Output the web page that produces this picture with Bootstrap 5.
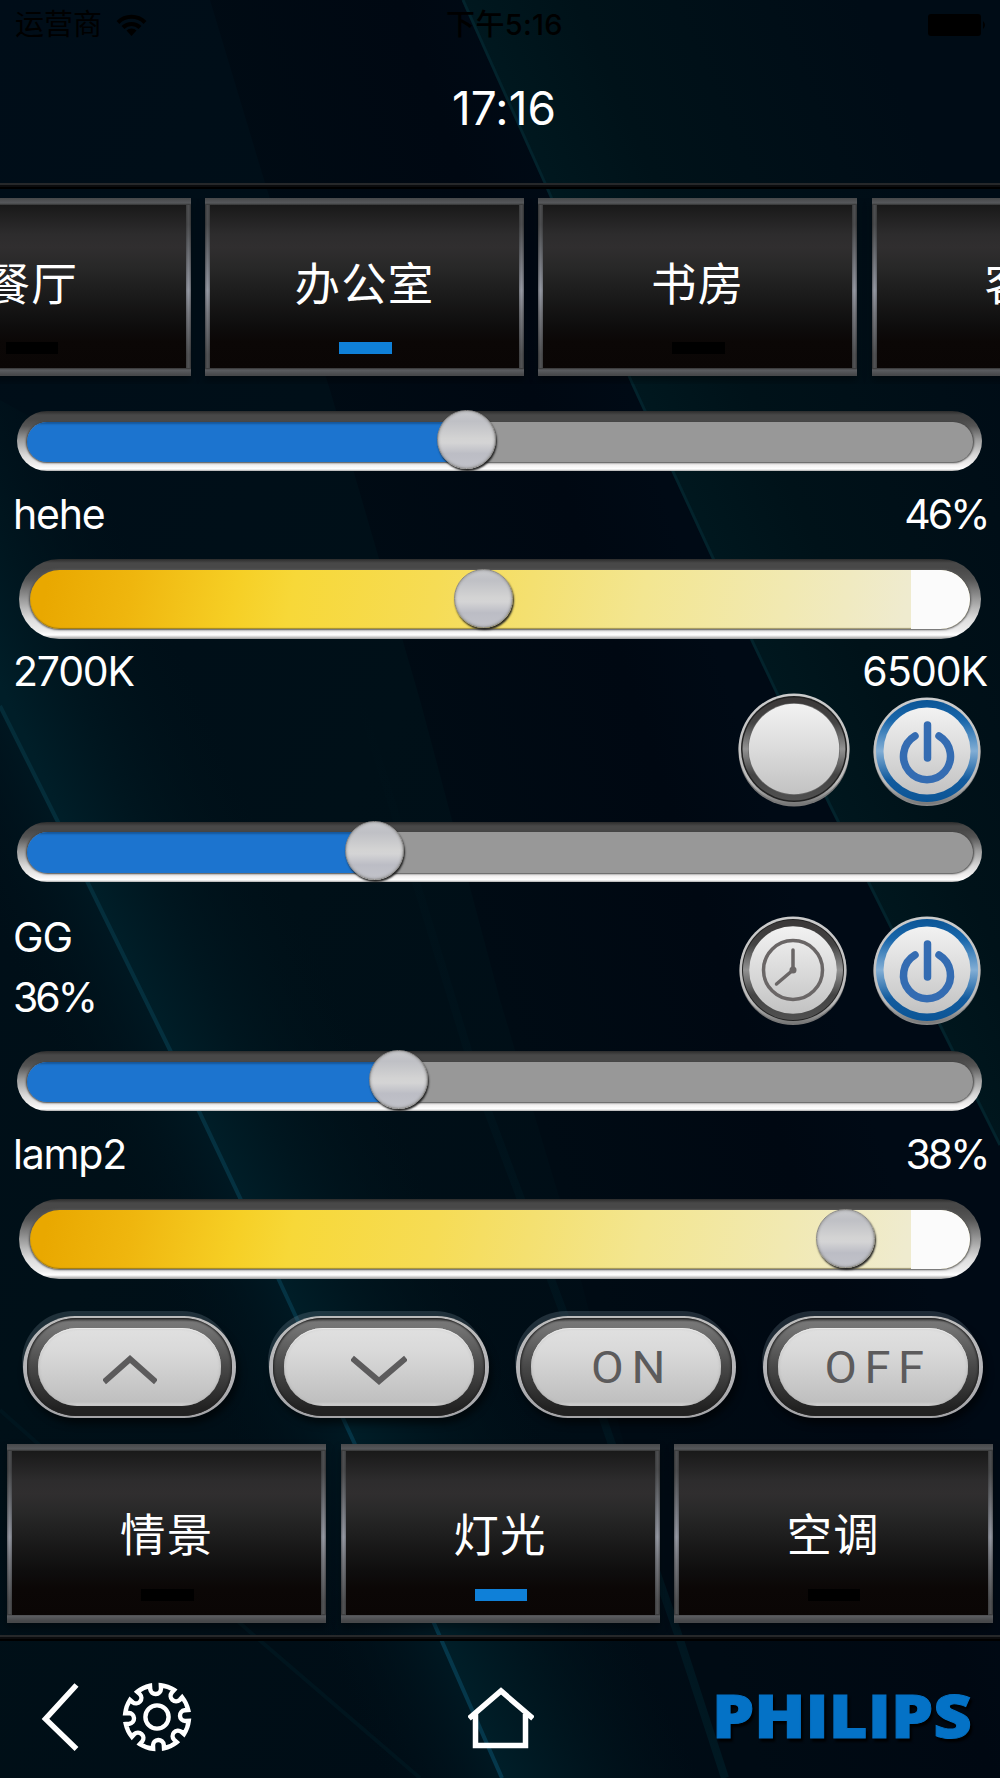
<!DOCTYPE html>
<html lang="zh-CN">
<head>
<meta charset="utf-8">
<meta name="viewport" content="width=device-width, initial-scale=1">
<title>灯光</title>
<link href="https://cdn.jsdelivr.net/npm/bootstrap@5.3.0/dist/css/bootstrap.min.css" rel="stylesheet">
<style>
body{background:#000c16;color:#fff;font-family:Inter,"Noto Sans CJK SC",sans-serif;width:1000px;height:1778px;overflow:hidden}
svg{display:block;flex:none}
.backdrop-art{position:absolute;inset:0;z-index:-1}
.status-line{height:50px;padding:0 14px 0 15px;color:#000;font-size:29px;line-height:50px}
.status-line .side{width:200px;gap:14px}
.status-time{letter-spacing:.3px}
.clock-text{height:133px;padding-bottom:17px;font-size:46px;letter-spacing:.1px}
.rule-line{height:6px;background:linear-gradient(#26282a 0 1.5px,#0b0c0e 2px 4px,#000 4px);flex:none}
.tile-strip{gap:14.3px;flex:none;padding-bottom:6px}
.tile-scroll{margin-top:8.5px;padding-bottom:8px;overflow:hidden}
.tile-scroll .tile:first-child{margin-left:-128.3px}
.tile{width:319px;height:178.5px;flex:none;padding:7px 5px 8px;background:
 linear-gradient(#47484a,#56585b 5px,#333 7px,transparent 7px),
 linear-gradient(transparent 170px,#333 170px,#5b5d61 172px,#47484a 177px),
 linear-gradient(90deg,rgba(0,0,0,.35),transparent 2px 3px,rgba(0,0,0,.25) 5px,transparent 5px 314px,rgba(0,0,0,.25) 314px,transparent 316px 317px,rgba(0,0,0,.35)),
 linear-gradient(#4c4d4f 15%,#9498a2 52%,#77797f 65%,#505153 88%);box-shadow:0 5px 8px rgba(0,0,0,.35)}
.tile-face{position:relative;height:100%;font-size:45.5px;letter-spacing:1.2px;line-height:153px;text-align:center;font-family:"Noto Sans CJK SC",sans-serif;background:linear-gradient(#191919,#2d2c2d 18%,#302e2f 26%,#282828 38%,#1b1b1b 55%,#0e0d0d 74%,#0b0706 84%,#0a0605)}
.tile-tall .tile-face{line-height:162px}
.tile-face::after{content:"";position:absolute;left:129px;bottom:14px;width:52.5px;height:12px;background:#000}
.tile-face.active::after{background:#0f80d8}
.track{position:relative;flex:none}
.dim{margin:0 18px 0 17px;height:60px;border-radius:30px;padding:10.5px 9px 9px 10px;background:linear-gradient(#2c2c2c,#484848 4px 8px,#555 15px,#999 28px,#d8d8d8 44px,#f2f0f0 54px,#fff 58px,#aaa)}
.dim-inner{height:100%;border-radius:21px;overflow:hidden;background:#989898;box-shadow:0 0 2px 1px #444}
.dim-fill{height:100%;background:#1c74cf;box-shadow:inset 0 2px 2px #16579b}
.thumb{position:absolute;top:-1px;width:59px;height:59px;margin-left:-30px;border-radius:50%;background:linear-gradient(#c9cacd,#bfc0c5 18%,#d3d3d3 48%,#d4d4d5 56%,#bcbdc5 75%,#c1c2c9);border:1.5px solid #8a8988;box-shadow:1px 2px 2px #222,inset 0 0 3px #888}
.cct{margin:0 19.5px 0 19px;height:79.5px;border-radius:40px;padding:10.5px 11px 10px;background:linear-gradient(#2c2c2c,#484848 4px 9px,#555 20px,#999 40px,#ddd 60px,#eee 72px,#fff 76px,#999)}
.cct-inner{height:100%;border-radius:30px;overflow:hidden;background:linear-gradient(100deg,#e9a800 2%,#efb60e 11%,#f6cf25 22%,#f7d838 28%,#f6dc55 43%,#f4e070 53%,#f3e691 65%,#f1e9b2 80%,#efebcf 93%);box-shadow:0 0 2px 1px #555,inset 0 -1px 1px rgba(80,70,30,.5)}
.cct-end{width:59px;height:100%;background:#fbfbfb;margin-left:auto;border-radius:0 30px 30px 0}
.cct .thumb{top:9.5px}
.label-line{padding:0 12.5px 0 13px;font-size:41px;letter-spacing:-1.2px;flex:none}
.pct{letter-spacing:-3px}
.label-line .stack{line-height:60px}
.round-set{gap:23px}
.pill-shell{height:102.5px;border-radius:52px/51px;background:linear-gradient(#bcbcbc,#b5b5b8 50%,#a4a4a7);padding:2.5px 4px;box-shadow:3px 6px 7px rgba(0,0,0,.55),-2px -6px 0 -1px rgba(105,125,140,.3);flex:none}
.pill-ring{height:100%;border-radius:49px/48px;padding:9.5px 11px 10px;background:linear-gradient(#3a3a3a,#777 4px,#747474 9px,#484848 50%,#222 92%);box-shadow:inset 0 0 2px 1px #222}
.pill-face{height:100%;border-radius:39px;background:linear-gradient(#e0e0e0,#d9d9d9 30%,#bfbfbf 95%,#ddd);box-shadow:inset 0 1px 1px #eee,inset 0 0 3px #aaa}
.pill-face text{font-family:Roboto,sans-serif;font-size:43.5px;fill:#5c5b5c;letter-spacing:7px}
.foot-bar{height:137px}
</style>
<script src="https://cdn.jsdelivr.net/npm/bootstrap@5.3.0/dist/js/bootstrap.bundle.min.js"></script>
</head>
<body class="position-relative d-flex flex-column m-0">
<svg class="backdrop-art" width="1000" height="1778" viewBox="0 0 1000 1778">
 <defs>
  <linearGradient id="base" x1="0" y1="0" x2="1" y2="1"><stop offset="0" stop-color="#000d18"/><stop offset=".4" stop-color="#001018"/><stop offset="1" stop-color="#000a14"/></linearGradient>
  <linearGradient id="right" gradientUnits="userSpaceOnUse" x1="600" y1="330" x2="940" y2="180"><stop offset="0" stop-color="#00181f"/><stop offset=".3" stop-color="#001219"/><stop offset="1" stop-color="#000c16"/></linearGradient>
  <linearGradient id="dark" gradientUnits="userSpaceOnUse" x1="300" y1="400" x2="600" y2="300"><stop offset="0" stop-color="#000b14"/><stop offset=".7" stop-color="#000812"/><stop offset="1" stop-color="#000a15"/></linearGradient>
  <linearGradient id="beam" gradientUnits="userSpaceOnUse" x1="230" y1="1180" x2="390" y2="1106"><stop offset="0" stop-color="#001e28"/><stop offset=".35" stop-color="#001720" stop-opacity=".9"/><stop offset="1" stop-color="#00121a" stop-opacity="0"/></linearGradient>
  <linearGradient id="beamL" gradientUnits="userSpaceOnUse" x1="230" y1="1180" x2="130" y2="1226"><stop offset="0" stop-color="#001822"/><stop offset="1" stop-color="#001019" stop-opacity="0"/></linearGradient>
  <linearGradient id="ray" x1="0" y1="0" x2="0" y2="1"><stop offset="0" stop-color="#042c38"/><stop offset="1" stop-color="#05384c"/></linearGradient>
  <linearGradient id="seam" gradientUnits="userSpaceOnUse" x1="0" y1="700" x2="0" y2="1778"><stop offset="0" stop-color="#001c26" stop-opacity="0"/><stop offset="1" stop-color="#001e28" stop-opacity=".7"/></linearGradient>
  <linearGradient id="face" x1="0" y1="0" x2="0" y2="1"><stop offset="0" stop-color="#f2f2f2"/><stop offset=".5" stop-color="#dbdbdb"/><stop offset="1" stop-color="#c2c2c2"/></linearGradient>
  <linearGradient id="rim" x1="0" y1="0" x2="0" y2="1"><stop offset="0" stop-color="#ccc"/><stop offset=".8" stop-color="#bbb"/><stop offset="1" stop-color="#777"/></linearGradient>
  <linearGradient id="grey" x1="0" y1="0" x2="0" y2="1"><stop offset="0" stop-color="#3a3737"/><stop offset=".25" stop-color="#444"/><stop offset=".5" stop-color="#929292"/><stop offset=".75" stop-color="#444"/><stop offset="1" stop-color="#505050"/></linearGradient>
  <linearGradient id="blue" x1="0" y1="0" x2="0" y2="1"><stop offset="0" stop-color="#0b5596"/><stop offset=".2" stop-color="#1967ab"/><stop offset=".5" stop-color="#82aed5"/><stop offset=".78" stop-color="#125b9e"/><stop offset="1" stop-color="#0b5596"/></linearGradient>
 </defs>
 <rect width="1000" height="1778" fill="url(#base)"/>
 <path d="M210 0 462 0 545 183 633 385 713 558 830 805 945 1035 1000 1145V1778H725L680 1640 620 1430 560 1200 500 1000 420 700 330 390 265 183Z" fill="url(#dark)"/>
 <path d="M462 0H1000V1145L945 1035 830 805 713 558 633 385 545 183Z" fill="url(#right)"/>
 <path d="M463 0 545 183 633 385 713 558 830 805 945 1035 1000 1145" fill="none" stroke="#03232c" stroke-width="3"/>
 <path d="M0 708 170 1050 278 1278 437 1630 500 1778H725L560 1400 350 900 180 500 0 400Z" fill="url(#beam)"/>
 <path d="M0 708 170 1050 278 1278 437 1630 500 1778H300L0 1100Z" fill="url(#beamL)"/>
 <path d="M0 706 57 820 170 1050 278 1278 353 1440 437 1630 502 1778" fill="none" stroke="url(#ray)" stroke-width="4"/>
 <path d="M360 700 480 1090 600 1410 680 1640 725 1778" fill="none" stroke="url(#seam)" stroke-width="8"/>
 <path d="M0 1410 250 1632 420 1778" fill="none" stroke="#00151e" stroke-width="4"/>
</svg>

<header class="flex-shrink-0">
 <div class="status-line d-flex align-items-center justify-content-between">
  <div class="side d-flex align-items-center"><span>运营商</span>
   <svg width="31" height="24" viewBox="0 0 31 24" fill="none" stroke="#000" stroke-width="4"><path d="M2 9.5a19 19 0 0 1 27 0M7 14.5a12 12 0 0 1 17 0"/><path d="M15.5 23 10.500 17.500a7 7 0 0 1 10 0Z" fill="#000" stroke="none"/></svg></div>
  <span class="status-time fw-medium ps-2">下午5:16</span>
  <div class="side d-flex justify-content-end"><svg width="58" height="22" viewBox="0 0 58 22"><rect width="53" height="22" rx="3"/><path d="M55 7q4 4 0 8Z"/></svg></div>
 </div>
 <div class="clock-text d-flex align-items-center justify-content-center ps-2">17:16</div>
 <div class="rule-line"></div>
</header>

<nav class="tile-strip tile-scroll d-flex">
 <div class="tile"><div class="tile-face">餐厅</div></div>
 <div class="tile"><div class="tile-face active">办公室</div></div>
 <div class="tile"><div class="tile-face">书房</div></div>
 <div class="tile"><div class="tile-face">客厅</div></div>
</nav>

<main class="d-flex flex-column flex-shrink-0" style="padding-top:27px">
 <div class="track dim"><div class="dim-inner"><div class="dim-fill" style="width:46.4%"></div></div><div class="thumb" style="left:449.5px"></div></div>
 <div class="label-line d-flex justify-content-between align-items-center" style="height:88px;padding-bottom:1px"><span>hehe</span><span class="pct">46%</span></div>
 <div class="track cct"><div class="cct-inner"><div class="cct-end"></div></div><div class="thumb" style="left:465px"></div></div>
 <div class="label-line d-flex justify-content-between align-items-center" style="height:65px;padding-top:2px"><span>2700K</span><span style="letter-spacing:-.9px">6500K</span></div>
 <div class="round-set d-flex justify-content-end align-items-center" style="height:117.5px;margin-top:-10px;padding:0 19.5px 4px 0">
  <svg width="112" height="114" viewBox="-56 -56 112 114"><circle cy="2" r="55.5" fill="#777"/><circle r="55.5" fill="url(#rim)"/><circle r="53" fill="#222"/><circle r="51.5" fill="url(#grey)"/><circle r="46" fill="#666"/><circle r="45.3" fill="url(#face)"/></svg>
  <svg class="mt-1" width="108" height="110" viewBox="-54 -54 108 110"><circle cy="1.5" r="53.5" fill="#888"/><circle r="53.5" fill="url(#rim)"/><circle r="51" fill="url(#blue)"/><circle r="43.5" fill="url(#face)"/><g id="power" fill="none" stroke="#346cb2" stroke-width="7.5" stroke-linecap="round"><path d="M.5-26V7M-12-15A23.5 23.5 0 1 0 12-15"/></g></svg>
 </div>
 <div class="track dim" style="margin-top:10.5px"><div class="dim-inner"><div class="dim-fill" style="width:36.7%"></div></div><div class="thumb" style="left:358px"></div></div>
 <div class="label-line d-flex justify-content-between align-items-center" style="height:169.5px;padding-right:19.5px;padding-top:2px">
  <div class="stack"><div>GG</div><div class="pct">36%</div></div>
  <div class="round-set d-flex pt-2" style="gap:25.5px">
   <svg width="108" height="110" viewBox="-54 -54 108 110"><circle cy="1.5" r="53.5" fill="#777"/><circle r="53.5" fill="url(#rim)"/><circle r="51" fill="#222"/><circle r="50" fill="url(#grey)"/><circle r="43.8" fill="url(#face)"/><g fill="none" stroke="#6a6666" stroke-width="3.5" stroke-linecap="round"><circle r="29.5"/><path d="M0-20V0L-16.500 14"/></g><circle r="3.5" fill="#6a6666"/></svg>
   <svg width="108" height="110" viewBox="-54 -54 108 110"><circle cy="1.5" r="53.5" fill="#888"/><circle r="53.5" fill="url(#rim)"/><circle r="51" fill="url(#blue)"/><circle r="43.5" fill="url(#face)"/><use href="#power"/></svg>
  </div>
 </div>
 <div class="track dim"><div class="dim-inner"><div class="dim-fill" style="width:39.3%"></div></div><div class="thumb" style="left:382px"></div></div>
 <div class="label-line d-flex justify-content-between align-items-center" style="height:88px"><span>lamp2</span><span class="pct">38%</span></div>
 <div class="track cct"><div class="cct-inner"><div class="cct-end"></div></div><div class="thumb" style="left:827px"></div></div>
 <div class="d-flex justify-content-between" style="padding:37px 17px 26px 23px">
  <div class="pill-shell" style="width:213px;margin-right:6px"><div class="pill-ring"><div class="pill-face d-flex align-items-center justify-content-center"><svg class="mt-1" width="54" height="32" viewBox="0 0 54 32" fill="none" stroke="#5c5b5c" stroke-width="6"><path d="M1 29 27 6 53 29"/></svg></div></div></div>
  <div class="pill-shell" style="width:220px"><div class="pill-ring"><div class="pill-face d-flex align-items-center justify-content-center"><svg class="mt-2" width="56" height="32" viewBox="0 0 56 32" fill="none" stroke="#5c5b5c" stroke-width="6"><path d="M1 3 28 26 55 3"/></svg></div></div></div>
  <div class="pill-shell" style="width:220px"><div class="pill-ring"><div class="pill-face"><svg width="190" height="76" viewBox="0 0 190 76"><text x="60" y="55" textLength="82" lengthAdjust="spacingAndGlyphs">ON</text></svg></div></div></div>
  <div class="pill-shell" style="width:220px"><div class="pill-ring"><div class="pill-face"><svg width="190" height="76" viewBox="0 0 190 76"><text x="46.5" y="55" textLength="107" lengthAdjust="spacingAndGlyphs">OFF</text></svg></div></div></div>
 </div>
</main>

<nav class="tile-strip tile-tall d-flex justify-content-center">
 <div class="tile"><div class="tile-face">情景</div></div>
 <div class="tile"><div class="tile-face active">灯光</div></div>
 <div class="tile"><div class="tile-face">空调</div></div>
</nav>
<footer class="flex-shrink-0" style="padding-top:6px">
 <div class="rule-line"></div>
 <div class="foot-bar d-flex align-items-start">
  <svg width="40" height="70" viewBox="0 0 40 70" fill="none" stroke="#fff" stroke-width="5.5" style="margin:41px 0 0 41px"><path d="M35.5 3 4.500 37 35.500 67"/></svg>
  <svg id="gear" width="70" height="70" viewBox="-35 -35 70 70" fill="none" stroke="#fff" stroke-width="4.4" style="margin:41px 0 0 41px"></svg>
  <svg width="66" height="68" viewBox="0 0 66 68" fill="none" stroke="#fff" stroke-width="5.5" style="margin:43px 0 0 276px"><path d="M1 34.5 33 7 65 34.500M7.500 30V61.500H57.500V30"/></svg>
  <svg width="270" height="70" viewBox="0 0 270 70" style="margin:42px 0 0 179px;filter:drop-shadow(2px 3px 1px #000)"><text x="-1" y="55" font-family="'Open Sans'" font-weight="800" font-size="61" fill="#0472c6" stroke="#0472c6" stroke-width="1" textLength="260" lengthAdjust="spacingAndGlyphs">PHILIPS</text></svg>
 </div>
</footer>
<script>
/* Eight-segment gear: arcs on the rim joined by rounded notches. */
const pt=(r,a)=>(r*Math.cos(a)).toFixed(2)+' '+(r*Math.sin(a)).toFixed(2);
let d='';
for(let i=0;i<8;i++){const c=i*Math.PI/4-Math.PI/2-.05,n=.17,e=Math.PI/4-.17;
 d+=(i?'L':'M')+pt(32,c-n)+'L'+pt(28.5,c-.19)+'A5.4 5.4 0 0 0 '+pt(28.5,c+.19)+'L'+pt(32,c+n)+'A32 32 0 0 1 '+pt(32,c+e);}
document.getElementById('gear').innerHTML='<path d="'+d+'Z"/><circle r="11.6"/>';
</script>
</body>
</html>
